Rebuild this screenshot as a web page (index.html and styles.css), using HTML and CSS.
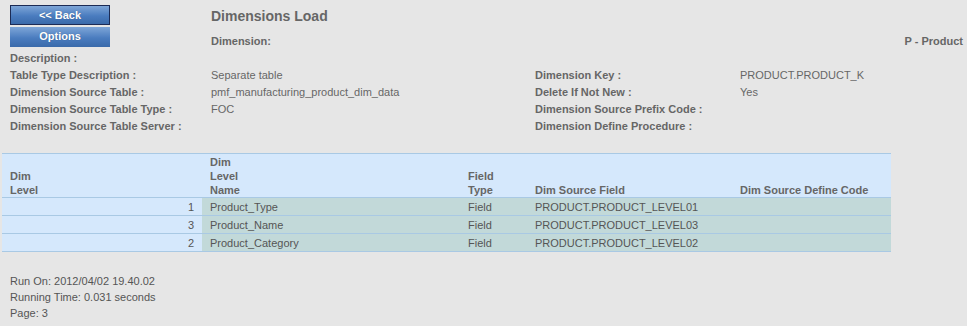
FILE: index.html
```html
<!DOCTYPE html>
<html lang="en">

<head>
    <meta charset="UTF-8">
    <title>Dimensions Load</title>
    <link rel="stylesheet" href="styles.css">
</head>

<body>
    <!-- Header: buttons + title -->
    <div class="head">
        <div class="buttons">
            <button class="btn btn-back">&lt;&lt; Back</button>
            <button class="btn btn-options">Options</button>
        </div>
        <div class="titles">
            <h1>Dimensions Load</h1>
            <div class="dim-line">
                <span class="label">Dimension:</span>
                <span class="label">P - Product</span>
            </div>
        </div>
    </div>

    <!-- Dimension details -->
    <div class="info">
        <div class="label full">Description :</div>

        <div class="label">Table Type Description :</div>
        <div class="value">Separate table</div>
        <div class="label">Dimension Key :</div>
        <div class="value">PRODUCT.PRODUCT_K</div>

        <div class="label">Dimension Source Table :</div>
        <div class="value">pmf_manufacturing_product_dim_data</div>
        <div class="label">Delete If Not New :</div>
        <div class="value">Yes</div>

        <div class="label">Dimension Source Table Type :</div>
        <div class="value">FOC</div>
        <div class="label">Dimension Source Prefix Code :</div>
        <div class="value"></div>

        <div class="label">Dimension Source Table Server :</div>
        <div class="value"></div>
        <div class="label">Dimension Define Procedure :</div>
        <div class="value"></div>
    </div>

    <!-- Levels table -->
    <table class="levels">
        <thead>
            <tr>
                <th class="c1">Dim<br>Level</th>
                <th class="c2">Dim<br>Level<br>Name</th>
                <th class="c3">Field<br>Type</th>
                <th class="c4">Dim Source Field</th>
                <th class="c5">Dim Source Define Code</th>
            </tr>
        </thead>
        <tbody>
            <tr>
                <td class="num">1</td>
                <td>Product_Type</td>
                <td>Field</td>
                <td>PRODUCT.PRODUCT_LEVEL01</td>
                <td></td>
            </tr>
            <tr>
                <td class="num">3</td>
                <td>Product_Name</td>
                <td>Field</td>
                <td>PRODUCT.PRODUCT_LEVEL03</td>
                <td></td>
            </tr>
            <tr>
                <td class="num">2</td>
                <td>Product_Category</td>
                <td>Field</td>
                <td>PRODUCT.PRODUCT_LEVEL02</td>
                <td></td>
            </tr>
        </tbody>
    </table>

    <!-- Footer -->
    <div class="footer">
        <div>Run On: 2012/04/02 19.40.02</div>
        <div>Running Time: 0.031 seconds</div>
        <div>Page: 3</div>
    </div>
</body>

</html>
```

FILE: styles.css
```css
body {
    margin: 0;
    background: #e6e6e6;
    font-family: 'Liberation Sans', Arial, sans-serif;
    font-size: 11px;
    color: #666;
}

.head {
    display: grid;
    grid-template-columns: 201px 1fr;
    padding: 5px 4px 0 10px;
    height: 45px;
}

.buttons {
    display: flex;
    flex-direction: column;
    gap: 2px;
    width: 100px;
}

.btn {
    width: 100px;
    height: 20px;
    padding: 0;
    border: none;
    background: linear-gradient(to bottom, #7ea6d8, #4a7cbf 55%, #3a6aaa);
    color: #fff;
    font-family: inherit;
    font-size: 11px;
    font-weight: bold;
    text-shadow: 0 0 1px rgba(0, 0, 0, 0.3);
}

.btn-back {
    border: 1px solid #1c2b55;
}

.btn-options {
    padding-bottom: 3px;
}

.titles h1 {
    margin: 0;
    height: 22px;
    line-height: 22px;
    font-size: 14px;
    color: #666;
}

.dim-line {
    display: flex;
    justify-content: space-between;
    margin-top: 6px;
    line-height: 16px;
}

.label {
    font-weight: bold;
    color: #666;
}

.value {
    color: #666;
}

.info {
    display: grid;
    grid-template-columns: 201px 324px 205px 1fr;
    padding-left: 10px;
    line-height: 17px;
}

.info .full {
    grid-column: 1 / -1;
}

.levels {
    margin: 18px 0 0 2px;
    width: 889px;
    border-collapse: collapse;
    table-layout: fixed;
    font-size: 11px;
}

.levels th {
    background: #d5e8fc;
    text-align: left;
    vertical-align: bottom;
    font-weight: bold;
    color: #666;
    line-height: 14px;
    padding: 1px 8px 0 8px;
    border-top: 1px solid #a9c9e4;
    border-bottom: 1px solid #a9c9e4;
}

.levels .c1 { width: 184px; }
.levels .c2 { width: 242px; }
.levels .c3 { width: 51px; }
.levels .c4 { width: 189px; }

.levels td {
    background: #c2d9d9;
    color: #555;
    height: 17px;
    padding: 0 8px;
    border-bottom: 1px solid #a9c9e4;
}

.levels td.num {
    background: #d5e8fc;
    text-align: right;
}

.footer {
    margin-top: 21px;
    padding-left: 10px;
    line-height: 16px;
    color: #555;
}
```
